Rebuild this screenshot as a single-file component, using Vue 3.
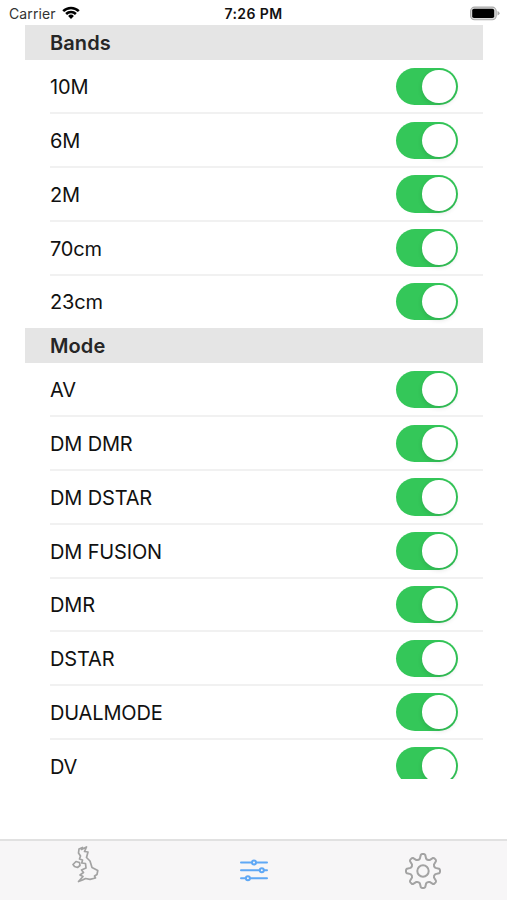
<template>
  <div class="screen">
    <header class="status">
      <div class="carrier">
        <span>Carrier</span>
        <svg class="wifi" viewBox="0 0 18 13">
          <path d="M0.3 4.2 A12.4 12.4 0 0 1 17.7 4.2 L15.9 6 A9.8 9.8 0 0 0 2.1 6 Z" />
          <path d="M3.2 7.1 A8.3 8.3 0 0 1 14.8 7.1 L13 8.9 A5.7 5.7 0 0 0 5 8.9 Z" />
          <path d="M6.1 10 A4.2 4.2 0 0 1 11.9 10 L9 12.9 Z" />
        </svg>
      </div>
      <div class="time">7:26 PM</div>
      <svg class="battery" viewBox="0 0 31 15">
        <rect x="1.6" y="1.1" width="25.6" height="12.6" rx="4" fill="#ddd" stroke="#aaa" stroke-width="1.1" />
        <rect x="3.2" y="2.8" width="22" height="9.2" rx="1.8" fill="#000" />
        <path d="M28.5 5 Q30.6 5.8 30.6 7.3 Q30.6 8.8 28.5 9.6 Z" fill="#aaa" />
      </svg>
    </header>

    <main class="list">
      <section v-for="group in groups" :key="group.title">
        <h2>{{ group.title }}</h2>
        <div v-for="item in group.items" :key="item.name" class="row" @click="item.on = !item.on">
          <span>{{ item.name }}</span>
          <button class="switch" :class="{ on: item.on }"><i></i></button>
        </div>
      </section>
    </main>

    <nav class="tabs">
      <button @click="tab = 'map'" :class="{ active: tab === 'map' }">
        <svg class="icon-map" viewBox="0 0 30 40">
          <path d="M7 5 L10.5 3.5 L9.5 5.5 L14.5 3 L12.5 7.5 L16 8 L14.5 13.5 L18 17 L20 23.5 L25.8 26.5 L25 30.5 L22.5 32 L23.5 34 L18 35.3 L13.5 34.5 L10.5 36 L6.5 37.5 L11 32.5 L8 31 L11.5 28.5 L9.5 26 L14 24 L13.5 19.5 L9.8 19 L10.5 16 L7.5 15 L8.5 12 L6.5 9 Z" />
          <path d="M1 20.5 L4 17.5 L7.5 18.5 L8 21.5 L5.5 23.5 L2.5 22.5 Z" />
        </svg>
      </button>
      <button @click="tab = 'filter'" :class="{ active: tab === 'filter' }">
        <svg class="icon-filter" viewBox="0 0 28 24">
          <path d="M1 4.5 H11.5 M16.5 4.5 H27 M1 12.3 H19.3 M24.3 12.3 H27 M1 20.2 H5.4 M10.4 20.2 H27" />
          <circle cx="14" cy="4.5" r="2" />
          <circle cx="21.8" cy="12.3" r="2" />
          <circle cx="7.9" cy="20.2" r="2" />
        </svg>
      </button>
      <button @click="tab = 'settings'" :class="{ active: tab === 'settings' }">
        <svg class="icon-gear" viewBox="0 0 36 36">
          <path :d="gear" />
          <circle cx="18" cy="18" r="5.7" />
        </svg>
      </button>
    </nav>
  </div>
</template>

<script setup>
import { ref, reactive } from 'vue'

const toItems = names => names.map(name => ({ name, on: true }))

const groups = reactive([
  { title: 'Bands', items: toItems(['10M', '6M', '2M', '70cm', '23cm']) },
  { title: 'Mode', items: toItems(['AV', 'DM DMR', 'DM DSTAR', 'DM FUSION', 'DMR', 'DSTAR', 'DUALMODE', 'DV']) }
])

const tab = ref('filter')

// eight teeth, each one a rounded bump between two valleys
function gearPath(){
  const at = (r, deg) => {
    const a = deg * Math.PI / 180
    return `${(18 + r * Math.sin(a)).toFixed(2)} ${(18 - r * Math.cos(a)).toFixed(2)}`
  }
  let d = `M${at(12.8, -14)}`
  for(let t = 0; t < 360; t += 45){
    d += ` L${at(16.2, t - 8)} Q${at(17, t - 6)} ${at(17, t - 3)} L${at(17, t + 3)}`
    d += ` Q${at(17, t + 6)} ${at(16.2, t + 8)} L${at(12.8, t + 14)} Q${at(11.4, t + 22.5)} ${at(12.8, t + 31)}`
  }
  return d + ' Z'
}
const gear = gearPath()
</script>

<style>
body{ background:#fff }
</style>

<style scoped>
.screen{ width:507px; height:900px; display:flex; flex-direction:column; background:#fff; color:#111; font-family:Inter, "Liberation Sans", sans-serif; overflow:hidden }
button{ border:0; padding:0; background:none }

.status{ flex:none; height:25.4px; padding:1px 7px 0 9px; box-sizing:border-box; display:grid; grid-template-columns:1fr auto 1fr; align-items:center; font-size:14px }
.carrier{ display:flex; align-items:center; gap:6px; color:#333; letter-spacing:.1px }
.wifi{ width:18px; height:13px; fill:#000; margin-top:-1px }
.time{ font-weight:600; font-size:14px; letter-spacing:.4px; transform:translateX(-1px) }
.battery{ width:31px; height:15px; justify-self:end }

.list{ flex:none; height:753.6px; margin:0 24.5px 0 25.4px; overflow:hidden }
h2{ margin:0; height:34.2px; line-height:36px; padding-left:24.6px; background:#e5e5e5; font-size:20px; font-weight:600; letter-spacing:.1px; color:#262626 }
.row{ height:53.75px; margin-left:24.6px; padding-right:24.5px; box-sizing:border-box; display:flex; align-items:center; justify-content:space-between; font-size:20px; letter-spacing:-.15px; box-shadow:0 1px 0 #f1f1f1, inset 0 -1px 0 #f1f1f1 }
.row > span{ padding-top:2px }
.row:last-child{ box-shadow:none }
.switch{ width:62.5px; height:37.6px; border-radius:19px; padding:2px; background:#e9e9eb; display:flex; margin-top:.4px }
.switch i{ width:33.6px; height:33.6px; border-radius:50%; background:#fff; box-shadow:0 2px 5px rgba(0,0,0,.12) }
.switch.on{ background:#34c759; justify-content:flex-end }

.tabs{ flex:none; height:61px; margin-top:auto; display:grid; grid-template-columns:repeat(3, 1fr); background:#f7f6f7; border-top:2px solid #e1e1e1; box-sizing:border-box }
.tabs button{ display:flex; align-items:center; justify-content:center; color:#a3a3a3 }
.tabs button.active{ color:#5fa8f5 }
.tabs svg{ fill:none; stroke:currentColor; stroke-width:2; stroke-linejoin:round; stroke-linecap:round }
.tabs .icon-map{ width:30px; height:40px; margin:-14px 0 0 4px; stroke-width:1.7 }
.icon-filter{ width:28px; height:24px; margin-top:-1px }
.icon-gear{ width:36px; height:36px; margin:1px 0 0 1px }
</style>
